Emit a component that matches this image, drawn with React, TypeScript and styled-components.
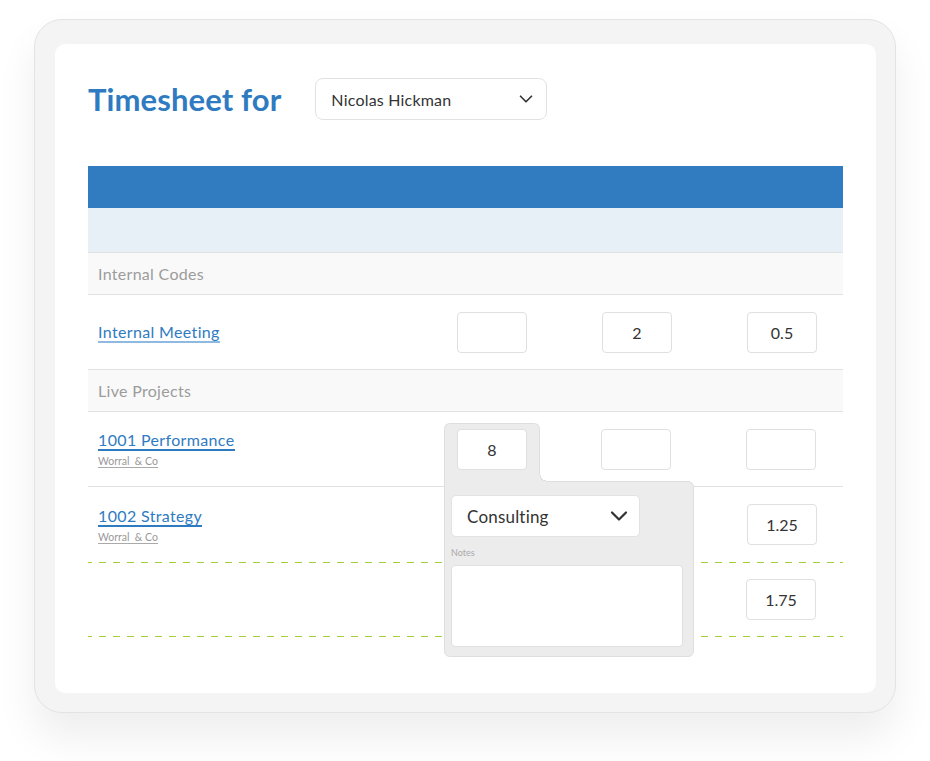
import React from "react";
import styled, { createGlobalStyle } from "styled-components";
import { ChevronDown } from "lucide-react";

const Global = createGlobalStyle`
  html, body { margin: 0; padding: 0; background: #ffffff; }
  body { font-family: "Lato", "Open Sans", sans-serif; color: #333; }
  * { box-sizing: border-box; }
`;

const Page = styled.div`
  padding: 19px 34px 48px 34px;
  width: 930px;
`;

const Frame = styled.div`
  width: 862px;
  height: 694px;
  background: #f4f4f4;
  border: 1px solid #e3e3e3;
  border-radius: 28px;
  padding: 24px 19px 19px 20px;
  box-shadow: 0 24px 40px rgba(0, 0, 0, 0.07);
`;

const Card = styled.div`
  background: #ffffff;
  border-radius: 10px;
  height: 100%;
  padding: 34px 33px 0 33px;
`;

const Header = styled.div`
  display: flex;
  align-items: center;
  gap: 34px;
  margin-bottom: 46px;
`;

const Title = styled.h1`
  margin: 0;
  font-size: 31px;
  font-weight: 700;
  color: #2f7bc1;
  letter-spacing: 0.1px;
`;

const SelectBox = styled.div<{ $w: number; $size: number; $pr: number }>`
  display: flex;
  align-items: center;
  justify-content: space-between;
  width: ${(p) => p.$w}px;
  height: 42px;
  background: #fff;
  border: 1px solid #e2e2e2;
  border-radius: ${(p) => (p.$size > 16 ? 5 : 8)}px;
  padding: 0 ${(p) => p.$pr}px 0 15px;
  font-size: ${(p) => p.$size}px;
  color: #333;
  letter-spacing: 0.2px;
`;

const Table = styled.div`
  display: flex;
  flex-direction: column;
`;

const TopBar = styled.div`
  height: 42px;
  background: #317bc1;
`;

const SubBar = styled.div`
  height: 45px;
  background: #e8f0f7;
  border-bottom: 1px solid #e2e2e2;
`;

const SectionRow = styled.div`
  height: 42px;
  background: #f9f9f9;
  border-bottom: 1px solid #e2e2e2;
  display: flex;
  align-items: center;
  padding-left: 10px;
  font-size: 16px;
  letter-spacing: 0.3px;
  color: #9c9c9c;
`;

const Row = styled.div<{ $plain?: boolean; $h?: number }>`
  position: relative;
  display: grid;
  grid-template-columns: 359px 145px 145px 105px;
  height: ${(p) => p.$h ?? 75}px;
  border-bottom: ${(p) => (p.$plain ? "none" : "1px solid #e2e2e2")};
`;

const DashLine = styled.div`
  height: 1px;
  background-image: repeating-linear-gradient(
    90deg,
    #a3d03a 0px,
    #a3d03a 7px,
    #ffffff 7px,
    #ffffff 14px
  );
  background-position: -3px 0;
`;

const NameCell = styled.div`
  display: flex;
  flex-direction: column;
  justify-content: center;
  align-items: flex-start;
  padding-left: 10px;
  gap: 4px;
`;

const Link = styled.a<{ $light?: boolean }>`
  font-size: 16px;
  letter-spacing: 0.35px;
  color: #2f7bc1;
  text-decoration: none;
  line-height: 19px;
  border-bottom: 2px solid ${(p) => (p.$light ? "#8fb9e0" : "#2f7bc1")};
  cursor: pointer;
`;

const Client = styled.span`
  font-size: 10.5px;
  color: #999;
  white-space: pre;
  line-height: 12px;
  border-bottom: 1px solid #aaa;
`;

const HourCell = styled.div<{ $pl?: number; $pt?: number }>`
  display: flex;
  align-items: flex-start;
  padding: ${(p) => p.$pt ?? 17}px 0 0 ${(p) => p.$pl ?? 10}px;
`;

const HourInput = styled.div`
  width: 70px;
  height: 41px;
  border: 1px solid #e0e0e0;
  border-radius: 4px;
  background: #fff;
  display: flex;
  align-items: center;
  justify-content: center;
  font-size: 16px;
  color: #333;
`;

const Popover = styled.div`
  position: absolute;
  left: 356px;
  top: 11px;
  z-index: 5;
  display: flex;
  flex-direction: column;
  align-items: flex-start;
`;

const PopTab = styled.div`
  position: relative;
  z-index: 2;
  width: 96px;
  height: 59px;
  margin-bottom: -1px;
  background: #ececec;
  border: 1px solid #dedede;
  border-bottom: none;
  border-radius: 6px 6px 0 0;
  padding: 5px 0 0 12px;

  &::after {
    content: "";
    position: absolute;
    right: -7px;
    bottom: 0;
    width: 7px;
    height: 7px;
    background: radial-gradient(
      circle at 100% 0,
      transparent 5.5px,
      #dedede 5.5px,
      #dedede 6.5px,
      #ececec 6.5px
    );
  }
`;

const PopBody = styled.div`
  width: 250px;
  height: 176px;
  background: #ececec;
  border: 1px solid #dedede;
  border-radius: 0 6px 6px 6px;
  padding: 13px 10px 8px 6px;
  display: flex;
  flex-direction: column;
`;

const NotesLabel = styled.div`
  font-size: 9px;
  color: #aaa;
  margin: 10px 0 7px 0;
  line-height: 11px;
`;

const NotesArea = styled.div`
  width: 232px;
  height: 82px;
  background: #fff;
  border: 1px solid #e0e0e0;
  border-radius: 4px;
`;

export default function App() {
  return (
    <>
      <Global />
      <Page>
        <Frame>
          <Card>
            <Header>
              <Title>Timesheet for</Title>
              <SelectBox $w={232} $size={16} $pr={9}>
                <span>Nicolas Hickman</span>
                <ChevronDown size={22} strokeWidth={1.8} color="#333" />
              </SelectBox>
            </Header>
            <Table>
              <TopBar />
              <SubBar />
              <SectionRow>Internal Codes</SectionRow>
              <Row>
                <NameCell>
                  <Link $light>Internal Meeting</Link>
                </NameCell>
                <HourCell>
                  <HourInput />
                </HourCell>
                <HourCell>
                  <HourInput>2</HourInput>
                </HourCell>
                <HourCell>
                  <HourInput>0.5</HourInput>
                </HourCell>
              </Row>
              <SectionRow>Live Projects</SectionRow>
              <Row>
                <NameCell>
                  <Link>1001 Performance</Link>
                  <Client>Worral  &amp; Co</Client>
                </NameCell>
                <HourCell />
                <HourCell $pl={9}>
                  <HourInput />
                </HourCell>
                <HourCell $pl={9}>
                  <HourInput />
                </HourCell>
                <Popover>
                  <PopTab>
                    <HourInput>8</HourInput>
                  </PopTab>
                  <PopBody>
                    <SelectBox $w={189} $size={17} $pr={6}>
                      <span>Consulting</span>
                      <ChevronDown size={28} strokeWidth={1.9} color="#333" />
                    </SelectBox>
                    <NotesLabel>Notes</NotesLabel>
                    <NotesArea />
                  </PopBody>
                </Popover>
              </Row>
              <Row $plain>
                <NameCell>
                  <Link>1002 Strategy</Link>
                  <Client>Worral  &amp; Co</Client>
                </NameCell>
                <HourCell />
                <HourCell />
                <HourCell>
                  <HourInput>1.25</HourInput>
                </HourCell>
              </Row>
              <DashLine />
              <Row $plain $h={73}>
                <NameCell />
                <HourCell />
                <HourCell />
                <HourCell $pl={9} $pt={16}>
                  <HourInput>1.75</HourInput>
                </HourCell>
              </Row>
              <DashLine />
            </Table>
          </Card>
        </Frame>
      </Page>
    </>
  );
}
